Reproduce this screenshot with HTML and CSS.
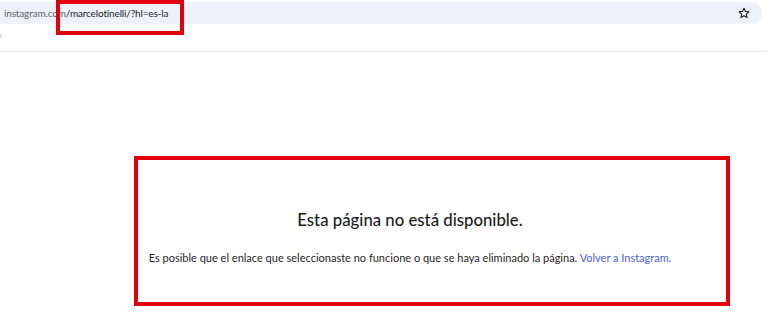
FILE: index.html
```html
<!DOCTYPE html>
<html lang="es">
<head>
    <meta charset="UTF-8">
    <title>Instagram</title>
    <link rel="stylesheet" href="styles.css">
</head>
<body>
    <div class="toolbar">
        <div class="omnibox">
            <span class="url"><span class="host">instagram.com</span>/marcelotinelli/?hl=es-la</span>
            <svg class="star" width="12" height="12" viewBox="0 0 24 24">
                <path d="M12 2.5l2.9 6.3 6.9.7-5.2 4.6 1.5 6.8L12 17.4l-6.1 3.5 1.5-6.8-5.2-4.6 6.9-.7z" fill="none" stroke="#222" stroke-width="2.2" stroke-linejoin="round"/>
            </svg>
        </div>
        <div class="mark"></div>
        <div class="highlight url-highlight"></div>
    </div>

    <main class="page">
        <div class="error-box">
            <h2 class="title">Esta página no está disponible.</h2>
            <p class="message">Es posible que el enlace que seleccionaste no funcione o que se haya eliminado la página. <a href="#" class="back">Volver a Instagram.</a></p>
        </div>
    </main>
</body>
</html>
```

FILE: styles.css
```css
body {
    margin: 0;
    padding: 0;
    background: #fff;
    font-family: Lato, "Noto Sans", Arial, sans-serif;
    color: #262626;
}

.toolbar {
    position: relative;
    height: 51px;
    border-bottom: 1px solid #e6e6e6;
}

.omnibox {
    position: relative;
    top: 2px;
    width: 762px;
    height: 22px;
    background: #edf1fa;
    border-radius: 0 11px 11px 0;
    display: flex;
    align-items: center;
    justify-content: space-between;
    box-sizing: border-box;
    padding: 0 12px 0 4px;
}

.url {
    font-size: 10px;
    letter-spacing: -0.15px;
    color: #1f1f1f;
}

.host {
    color: #5f6368;
}

.star {
    display: block;
}

.mark {
    margin-top: 12px;
    width: 2px;
    height: 4px;
    background: #ddd;
}

.highlight {
    position: absolute;
    border: 4px solid #e2000f;
    box-sizing: border-box;
}

.url-highlight {
    left: 56px;
    top: 0;
    width: 128px;
    height: 35px;
}

.page {
    padding: 104px 0 0 134px;
}

.error-box {
    width: 596px;
    height: 150px;
    box-sizing: border-box;
    border: 4px solid #e2000f;
    text-align: center;
    padding: 49px 44px 0 0;
}

.title {
    margin: 0;
    font-size: 16.75px;
    font-weight: 500;
    color: #1c1c1c;
}

.message {
    margin: 21px 0 0;
    font-size: 11px;
    color: #262626;
}

.back {
    color: #4a5fd0;
    text-decoration: none;
}
```
